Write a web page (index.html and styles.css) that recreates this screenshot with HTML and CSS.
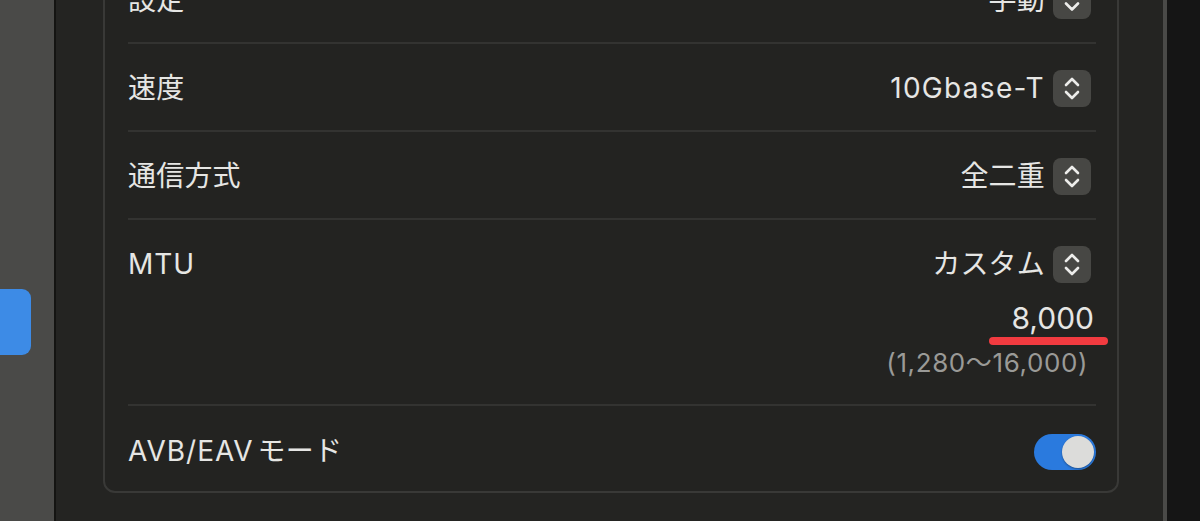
FILE: index.html
```html
<!DOCTYPE html>
<html lang="ja">
<head>
<meta charset="utf-8">
<link rel="stylesheet" href="styles.css">
</head>
<body>
<div class="window">
  <aside class="sidebar">
    <div class="sidebar-item"></div>
  </aside>
  <div class="split"></div>
  <main class="content">
    <section class="card">
      <div class="row">
        <span class="label">設定</span>
        <div class="control">
          <span class="value">手動</span>
          <span class="popup"><svg viewBox="0 0 38 37" width="38" height="37"><path d="M13 16.5 L19 10.5 L25 16.5 M13 21.5 L19 27.5 L25 21.5" /></svg></span>
        </div>
      </div>
      <div class="row">
        <span class="label">速度</span>
        <div class="control">
          <span class="value latin">10Gbase-T</span>
          <span class="popup"><svg viewBox="0 0 38 37" width="38" height="37"><path d="M13 15 L19 9 L25 15 M13 22 L19 28 L25 22" /></svg></span>
        </div>
      </div>
      <div class="row">
        <span class="label">通信方式</span>
        <div class="control">
          <span class="value">全二重</span>
          <span class="popup"><svg viewBox="0 0 38 37" width="38" height="37"><path d="M13 15 L19 9 L25 15 M13 22 L19 28 L25 22" /></svg></span>
        </div>
      </div>
      <div class="row row-mtu">
        <div class="mtu-top">
          <span class="label latin">MTU</span>
          <div class="control">
            <span class="value">カスタム</span>
            <span class="popup"><svg viewBox="0 0 38 37" width="38" height="37"><path d="M13 15 L19 9 L25 15 M13 22 L19 28 L25 22" /></svg></span>
          </div>
        </div>
        <div class="mtu-field">
          <span class="mtu-value">8,000<span class="mark"></span></span>
        </div>
        <div class="mtu-range">(1,280〜16,000)</div>
      </div>
      <div class="row row-last">
        <span class="label"><span class="latin">AVB/EAV</span><span class="gap"> </span>モード</span>
        <span class="toggle"><span class="knob"></span></span>
      </div>
    </section>
  </main>
  <div class="edge"></div>
  <div class="outside"></div>
</div>
</body>
</html>
```

FILE: styles.css
```css
* { box-sizing: border-box; }
html, body {
  margin: 0;
  padding: 0;
  height: 100%;
  overflow: hidden;
  background: #161616;
}
body {
  font-family: "Inter", "Noto Sans CJK JP", sans-serif;
  color: #e6e6e4;
}
.window {
  display: flex;
  height: 521px;
  width: 1200px;
}
.sidebar {
  width: 54px;
  flex: none;
  background: #4a4a48;
  padding-top: 289px;
}
.sidebar-item {
  width: 31px;
  height: 66px;
  background: #3d8be6;
  border-radius: 0 9px 9px 0;
}
.split {
  width: 2px;
  flex: none;
  background: #141412;
}
.content {
  flex: none;
  width: 1107px;
  background: #242422;
  padding: 0 44px 0 47px;
}
.card {
  margin-top: -46px;
  border: 2px solid #393937;
  border-radius: 12px;
  background: #232321;
  padding: 0 21px 0 23px;
}
.row {
  display: flex;
  align-items: center;
  justify-content: space-between;
  padding: 26px 0 23px;
  border-bottom: 2px solid #333331;
}
.row-last {
  border-bottom: none;
  padding: 27px 0 21px;
}
.label {
  font-size: 28px;
  line-height: 37px;
  letter-spacing: 0.2px;
}
.latin {
  letter-spacing: 1px;
}
.gap {
  letter-spacing: -4px;
}
.control {
  display: flex;
  align-items: center;
  gap: 8px;
  margin-right: 5px;
}
.value {
  font-size: 28px;
  line-height: 37px;
  letter-spacing: 0.2px;
}
.value.latin {
  letter-spacing: 1.3px;
}
.popup {
  width: 38px;
  height: 37px;
  border-radius: 8px;
  background: #474744;
  display: block;
}
.popup svg {
  display: block;
  fill: none;
  stroke: #ececea;
  stroke-width: 2.6;
  stroke-linecap: round;
  stroke-linejoin: round;
}
.row-mtu {
  flex-direction: column;
  align-items: stretch;
  padding-bottom: 25px;
}
.mtu-top {
  display: flex;
  align-items: center;
  justify-content: space-between;
}
.mtu-field {
  display: flex;
  justify-content: flex-end;
  margin-top: 17px;
}
.mtu-value {
  position: relative;
  font-size: 30px;
  line-height: 36px;
  margin-right: 2px;
}
.mark {
  position: absolute;
  left: -22px;
  right: -14px;
  bottom: -9px;
  height: 8px;
  border-radius: 4px;
  background: #f23b40;
}
.mtu-range {
  align-self: flex-end;
  margin-top: 11px;
  margin-right: 8px;
  font-size: 26px;
  line-height: 32px;
  letter-spacing: 0.6px;
  color: #9a9a97;
}
.toggle {
  position: relative;
  width: 62px;
  height: 36px;
  border-radius: 18px;
  background: #2a7ade;
  display: block;
}
.knob {
  position: absolute;
  right: 2px;
  top: 2px;
  width: 32px;
  height: 32px;
  border-radius: 50%;
  background: #dcdcda;
  box-shadow: 0 1px 2px rgba(0,0,0,0.35);
}
.edge {
  width: 4px;
  flex: none;
  background: #4a4a48;
}
.outside {
  flex: 1;
  background: #151515;
}
```
